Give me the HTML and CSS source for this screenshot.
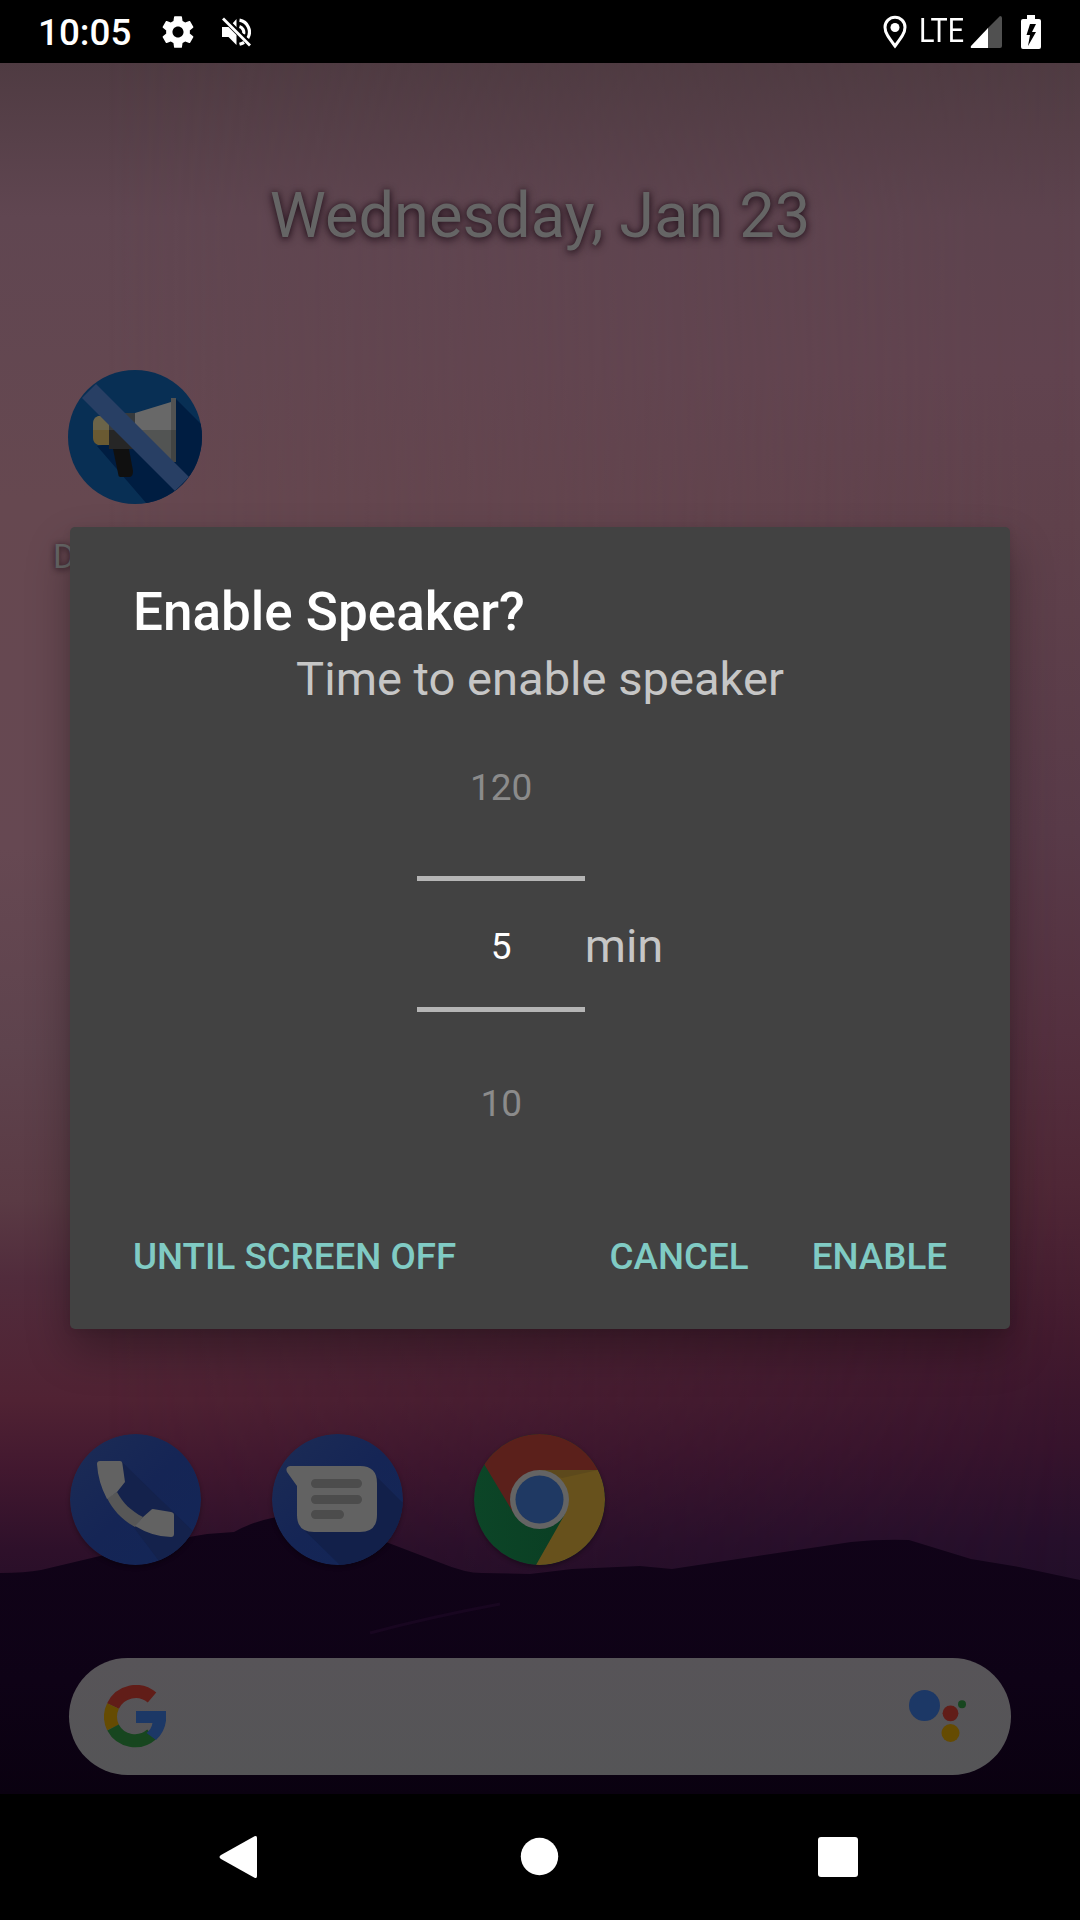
FILE: index.html
```html
<!DOCTYPE html>
<html lang="en">
<head>
<meta charset="utf-8">
<title>Enable Speaker?</title>
<link rel="stylesheet" href="styles.css">
</head>
<body>
<div class="screen">
  <header class="status">
    <span class="clock">10:05</span>
    <svg class="gear" viewBox="0 0 24 24"><path fill="#fff" d="M19.43 12.98c.04-.32.07-.64.07-.98s-.03-.66-.07-.98l2.11-1.65c.19-.15.24-.42.12-.64l-2-3.46c-.12-.22-.39-.3-.61-.22l-2.49 1c-.52-.4-1.08-.73-1.69-.98l-.38-2.65C14.46 2.18 14.25 2 14 2h-4c-.25 0-.46.18-.49.42l-.38 2.65c-.61.25-1.17.59-1.69.98l-2.49-1c-.23-.09-.49 0-.61.22l-2 3.46c-.13.22-.07.49.12.64l2.11 1.65c-.04.32-.07.65-.07.98s.03.66.07.98l-2.11 1.65c-.19.15-.24.42-.12.64l2 3.46c.12.22.39.3.61.22l2.49-1c.52.4 1.08.73 1.69.98l.38 2.65c.03.24.24.42.49.42h4c.25 0 .46-.18.49-.42l.38-2.65c.61-.25 1.17-.59 1.69-.98l2.49 1c.23.09.49 0 .61-.22l2-3.46c.12-.22.07-.49-.12-.64l-2.11-1.65zM12 15.500c-1.930 0-3.500-1.570-3.500-3.500s1.570-3.500 3.500-3.500 3.500 1.570 3.500 3.500-1.570 3.500-3.500 3.500z"/></svg>
    <svg class="muted" viewBox="0 0 30 30"><path fill="#fff" d="M1 10h6.500l8 8V28L7.500 20H1zM15.500 2v9l-4-4.500z"/><path fill="none" stroke="#fff" stroke-width="3.200" d="M18.500 3.200a12 12 0 0 1 8.200 18M18.500 9.500a6 6 0 0 1 4 7.500M18.500 27.300q2.500-.7 4.600-2"/><path fill="none" stroke="#000" stroke-width="2" d="M4 0l27 27"/><path fill="none" stroke="#fff" stroke-width="2.800" d="M2 1.500l27 27"/></svg>
    <span class="spacer"></span>
    <svg class="pin" viewBox="0 0 24 34"><path fill="none" stroke="#fff" stroke-width="3" d="M12 31C6 23 2 18 2 12.200a10 10 0 0 1 20 0C22 18 18 23 12 31z"/><circle cx="12" cy="12.500" r="4.500" fill="#fff"/></svg>
    <span class="lte">LTE</span>
    <svg class="signal" viewBox="0 0 32 32"><path fill="#505050" d="M30 0q2 0 2 2v28q0 2-2 2H17V13z"/><path fill="#fff" d="M18 12v20H2q-2 0-1-2z"/></svg>
    <svg class="battery" viewBox="0 0 20 34"><path fill="#fff" fill-rule="evenodd" d="M6 0h8v4h4q2 0 2 2v26q0 2-2 2H2q-2 0-2-2V6q0-2 2-2h4zM9 9L5.500 20H9L7 31l8-14h-4l4-8z"/></svg>
  </header>

  <main class="home">
    <svg class="wallpaper" viewBox="0 63 1080 1731" preserveAspectRatio="none">
      <defs>
        <linearGradient id="sky" x1="0" y1="63" x2="0" y2="1600" gradientUnits="userSpaceOnUse">
          <stop offset="0" stop-color="#4f3b42"/><stop offset=".1" stop-color="#604651"/><stop offset=".285" stop-color="#664850"/>
          <stop offset=".51" stop-color="#664852"/><stop offset=".64" stop-color="#5e434d"/><stop offset=".74" stop-color="#5a3a44"/><stop offset=".79" stop-color="#512c3c"/><stop offset=".87" stop-color="#502233"/>
          <stop offset=".915" stop-color="#42182f"/><stop offset=".967" stop-color="#2e102a"/><stop offset="1" stop-color="#260e28"/>
        </linearGradient>
        <linearGradient id="skyRight" x1="0" y1="63" x2="0" y2="1600" gradientUnits="userSpaceOnUse">
          <stop offset="0" stop-color="#4f3b42"/><stop offset=".1" stop-color="#5d434e"/><stop offset=".2" stop-color="#61434f"/><stop offset=".3" stop-color="#5f414b"/>
          <stop offset=".5" stop-color="#583a48"/><stop offset=".63" stop-color="#54303f"/><stop offset=".73" stop-color="#4f2736"/><stop offset=".83" stop-color="#421a2e"/>
          <stop offset=".9" stop-color="#36132c"/><stop offset=".96" stop-color="#260f2b"/><stop offset="1" stop-color="#200e28"/>
        </linearGradient>
        <linearGradient id="fade"><stop offset=".1" stop-color="#000"/><stop offset="1" stop-color="#fff"/></linearGradient>
        <mask id="toRight"><rect y="63" width="1080" height="1731" fill="url(#fade)"/></mask>
        <linearGradient id="hill" x1="0" y1="0" x2="0" y2="1"><stop offset="0" stop-color="#110318"/><stop offset=".6" stop-color="#0e0216"/><stop offset="1" stop-color="#0a0110"/></linearGradient>
      </defs>
      <rect y="63" width="1080" height="1731" fill="url(#sky)"/>
      <rect y="63" width="1080" height="1731" fill="url(#skyRight)" mask="url(#toRight)"/>
      <path fill="url(#hill)" d="M0 1573Q25 1573 41 1570L100 1556 189 1537 207 1534 234 1532Q252 1522 272 1518L300 1513Q335 1512 355 1527L386 1542 441 1563Q465 1573 482 1573L530 1574 572 1569 640 1566 672 1569 764 1555 851 1542Q880 1539 909 1540L971 1559 1019 1567 1080 1580V1794H0z"/>
      <path fill="none" stroke="#180620" stroke-width="3" d="M370 1633q60-16 130-29"/>
    </svg>

    <div class="date">Wednesday, Jan 23</div>
    <div class="app">
      <svg class="megaphone" viewBox="0 0 134 134">
        <defs><clipPath id="disc"><circle cx="67" cy="67" r="67"/></clipPath></defs>
        <g clip-path="url(#disc)">
          <rect width="134" height="134" fill="#082f54"/>
          <path fill="#001d41" d="M108 29l26 26v79H79L29 76 60 70z"/>
          <path fill="#6b6449" d="M41 46v15H25v-8q0-5 5-7z"/><path fill="#6a5a32" d="M25 60h16v15H30q-5-2-5-7z"/>
          <path fill="#363a3d" d="M41 43h27v17H41z"/><path fill="#262626" d="M41 60h27v19H41z"/>
          <path fill="#101010" d="M45 79h16l4 22q0 6-4 6H52q-2-1-2-4z"/>
          <path fill="#686868" d="M67 43l36-11v28H67z"/><path fill="#525453" d="M67 60h36v31L67 78z"/>
          <path fill="#525252" d="M103 28h5v32h-5z"/><path fill="#424443" d="M103 60h5v32h-5z"/>
          <path fill="#283f64" d="M14 28L28 14 121 107 107 121z"/>
        </g>
      </svg>
      <span class="app-name">D</span>
    </div>

    <div class="dock">
      <svg viewBox="0 0 131 131">
        <defs><linearGradient id="blue" x1="0" y1="0" x2="1" y2="1"><stop offset="0" stop-color="#1c2c55"/><stop offset=".5" stop-color="#152555"/><stop offset="1" stop-color="#132657"/></linearGradient>
        <clipPath id="ic"><circle cx="65.500" cy="65.500" r="65.500"/></clipPath></defs>
        <g clip-path="url(#ic)"><rect width="131" height="131" fill="url(#blue)"/>
        <path fill="#14224c" d="M52 28L131 105V131H92L40 62z"/>
        <path fill="#575757" d="M37 64L47 58C53 69 61 77 73 83L65 93C52 86 43 76 37 64z"/>
        <path fill="#626262" d="M30 27h20q2 0 2.300 2L55 48 47 58 37 65Q28 48 27 30q0-3 3-3zM83 75l18 3q3 .5 3 3v19q0 3-3 3-18 0-36-11l8-9 8-7q1-1.200 2-1z"/></g>
      </svg>
      <svg viewBox="0 0 131 131">
        <g clip-path="url(#ic)"><rect width="131" height="131" fill="url(#blue)"/>
        <path fill="#12204a" d="M100 38L131 69V131H68L30 94z"/>
        <path fill="#626262" d="M18 32H88q17 0 17 17v32q0 17-17 17H42Q25 98 25 81V52L15 38q-2-5 3-6z"/>
        <path stroke="#4c4c4c" stroke-width="9" stroke-linecap="round" d="M43.500 49.500h42M43.500 65.500h42M43.500 80.500h24"/></g>
      </svg>
      <svg viewBox="0 0 131 131">
        <defs><linearGradient id="gs" x1="0" y1="0" x2="1" y2="0"><stop offset="0" stop-color="#0c4527"/><stop offset="1" stop-color="#093c22"/></linearGradient></defs>
        <g clip-path="url(#ic)"><rect width="131" height="131" fill="url(#gs)"/>
        <path fill="#67511c" d="M65 36H131V131H62L91 80z"/>
        <path fill="#5d491c" d="M65 36h59l-36 8z"/>
        <path fill="#5b201b" d="M-5 0H131V36H65L40 80 10 30z"/></g>
        <circle cx="65.500" cy="65.500" r="29.500" fill="#646464"/><circle cx="65.500" cy="65.500" r="24" fill="#1f3963"/>
      </svg>
    </div>

    <div class="search">
      <svg class="google" viewBox="0 0 62 63"><g fill="none" stroke-width="13">
        <path stroke="#611d18" d="M48 12.500A25 25 0 0 0 9 21"/>
        <path stroke="#654b02" d="M9 21a25 25 0 0 0 0 21.500"/>
        <path stroke="#17461f" d="M9 42.500a25 25 0 0 0 38.500 7"/></g>
        <path fill="#1c3866" d="M32 26h30q2 18-10 29l-9.500-7q5-4 6-10H32z"/>
      </svg>
      <svg class="assistant" viewBox="0 0 57 52"><circle cx="15.500" cy="15.500" r="15.500" fill="#1c3866"/><circle cx="41.500" cy="23.300" r="7.900" fill="#611d18"/><circle cx="53" cy="14.300" r="4" fill="#17461f"/><circle cx="41.500" cy="43" r="9" fill="#654b02"/></svg>
    </div>

    <section class="dialog">
      <h1>Enable Speaker?</h1>
      <p class="message">Time to enable speaker</p>
      <div class="picker-row">
        <div class="picker">
          <span class="value above">120</span>
          <span class="value current">5</span>
          <span class="value below">10</span>
        </div>
        <span class="unit">min</span>
      </div>
      <div class="actions">
        <span>UNTIL SCREEN OFF</span><span class="spacer"></span><span>CANCEL</span><span>ENABLE</span>
      </div>
    </section>
  </main>

  <nav class="navbar">
    <svg viewBox="0 0 40 44"><path fill="#fff" d="M35.500 1.300Q38 0 38 3v38q0 3-2.500 1.700L2 24q-3-2 0-4z"/></svg>
    <svg viewBox="0 0 40 44"><circle cx="20.500" cy="21.500" r="18.700" fill="#fff"/></svg>
    <svg viewBox="0 0 40 44"><rect x="0" y="2" width="40" height="40" rx="3" fill="#fff"/></svg>
  </nav>
</div>
</body>
</html>
```
FILE: styles.css
```css
body { margin: 0; background: #000; font-family: Roboto, "Noto Sans", sans-serif; }
.screen { width: 1080px; height: 1920px; display: flex; flex-direction: column; overflow: hidden; }
.spacer { flex: 1; }
svg { display: block; flex: none; }

.status { height: 63px; box-sizing: border-box; padding: 0 39px 0 38px; display: flex; align-items: center; color: #fff; }
.clock { font-size: 36.800px; font-weight: 500; line-height: 66px; padding-top: 3px; width: 121px; }
.gear { width: 38px; height: 38px; }
.muted { width: 30px; height: 30px; margin-left: 24px; }
.pin { width: 24px; height: 34px; }
.lte { font-size: 33px; line-height: 60px; padding-bottom: 2px; margin: 0 7px 0 12px; width: 44px; transform: scaleX(.87); transform-origin: left; }
.signal { width: 32px; height: 32px; }
.battery { width: 20px; height: 34px; margin-left: 19px; }

.home { position: relative; height: 1731px; display: flex; flex-direction: column; }
.wallpaper { position: absolute; inset: 0; width: 1080px; height: 1731px; }
.date { position: relative; margin-top: 114px; height: 76px; line-height: 76px; text-align: center; font-size: 63.200px; color: #656565; text-shadow: 0 2px 8px rgba(20, 5, 15, .8), 0 0 5px rgba(20, 5, 15, .35); }
.app { position: relative; margin: 117px 0 0 53px; width: 164px; display: flex; flex-direction: column; }
.megaphone { width: 134px; height: 134px; margin-left: 15px; }
.app-name { margin-top: 32px; font-size: 34px; line-height: 40px; color: #656565; text-shadow: 0 1px 6px rgba(20, 5, 15, .8); }
.dock { position: relative; margin: 858px 0 0 70px; display: flex; gap: 71px; }
.dock svg { width: 131px; height: 131px; border-radius: 50%; box-shadow: 0 2px 4px rgba(0, 0, 0, .3); }
.search { position: relative; margin: 93px 69px 0; height: 117px; box-sizing: border-box; padding: 0 45px 0 35px; border-radius: 59px; background: linear-gradient(#575458, #555557); display: flex; align-items: center; justify-content: space-between; }
.google { width: 62px; height: 63px; }
.assistant { width: 57px; height: 52px; margin-bottom: 1px; }

.dialog { position: absolute; left: 70px; top: 464px; width: 940px; height: 802px; box-sizing: border-box; padding: 51px 63px 36px; border-radius: 5px; background: #424242; box-shadow: 0 22px 44px rgba(0, 0, 0, .3), 0 2px 8px rgba(0, 0, 0, .08); display: flex; flex-direction: column; }
h1 { margin: 0; font-size: 53px; font-weight: 500; line-height: 68px; color: #fff; }
.message { margin: 2px 0 0; font-size: 47.100px; line-height: 62px; text-align: center; color: #c6c6c6; }
.picker-row { display: flex; justify-content: center; align-items: center; height: 462px; margin-top: 4px; }
.picker { width: 168px; display: flex; flex-direction: column; align-items: center; font-size: 37px; }
.value { line-height: 53px; padding-left: 1px; }
.above { color: #8b8b8b; }
.below { color: #8b8b8b; }
.current { width: 168px; box-sizing: border-box; height: 136px; margin: 62px 0 65px; border: solid #b5b5b5; border-width: 5px 0; line-height: 131px; text-align: center; color: #fff; }
.unit { font-size: 47px; color: #c6c6c6; }
.actions { margin-top: auto; display: flex; gap: 31px; font-size: 36.750px; line-height: 72px; font-weight: 500; color: #80cbc4; }
.actions span:last-child { margin-left: 32px; }

.navbar { height: 126px; box-sizing: border-box; padding: 0 222px 0 219px; display: flex; align-items: center; justify-content: space-between; }
.navbar svg { width: 40px; height: 44px; }
```
